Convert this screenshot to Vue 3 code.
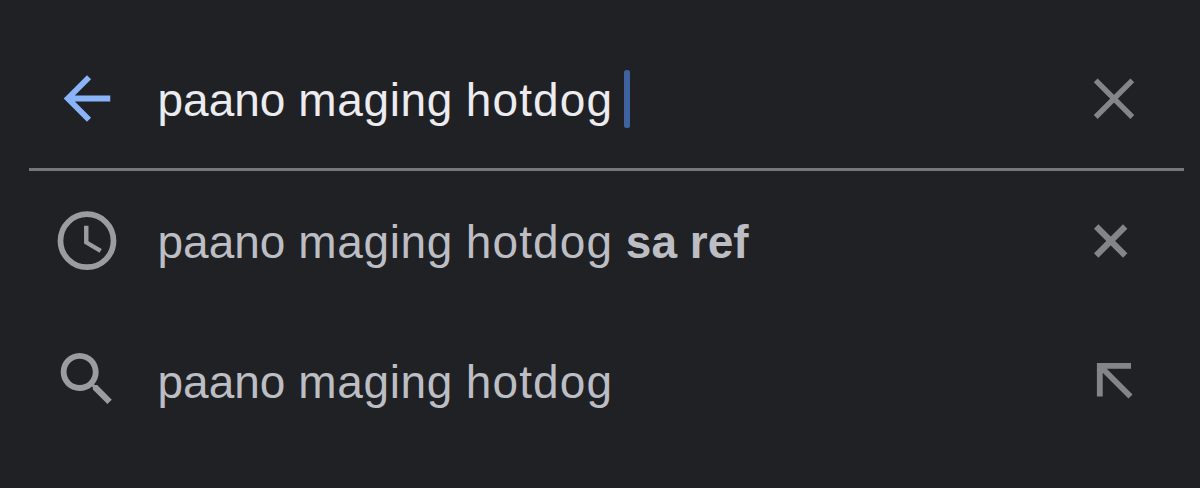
<script setup>
const words = [
  { text: 'paano', cls: 'first' },
  { text: 'maging', cls: 'second' },
  { text: 'hotdog', cls: 'third' },
]
</script>

<template>
  <main class="search">
    <header class="row field">
      <svg class="lead back" viewBox="0 0 60 60"><path transform="translate(-4.95 -5.450) scale(2.91)" d="M20 11H7.830l5.590-5.590L12 4l-8 8 8 8 1.410-1.410L7.830 13H20z" /></svg>
      <span class="text"><template v-for="(w, i) in words" :key="w.text">{{ i ? ' ' : '' }}<span :class="w.cls">{{ w.text }}</span></template></span><i class="caret"></i>
      <svg class="trail" viewBox="0 0 60 60"><path d="M11.700 11.400L48.300 48M48.300 11.400L11.700 48" stroke-width="5.400" /></svg>
    </header>
    <div class="row recent">
      <svg class="lead" viewBox="0 0 60 60"><circle cx="30" cy="29.700" r="26.500" fill="none" stroke="#999da2" stroke-width="5.700" /><path transform="translate(-5.400 -5.900) scale(2.950)" d="M12.500 7H11v6l5.250 3.150.750-1.230-4.500-2.670z" /></svg>
      <span class="text"><template v-for="(w, i) in words" :key="w.text">{{ i ? ' ' : '' }}<span :class="w.cls">{{ w.text }}</span></template>{{ ' ' }}<b>sa ref</b></span>
      <svg class="trail" viewBox="0 0 60 60"><path d="M12.200 15.500L41.200 44.500M41.200 15.500L12.200 44.500" stroke-width="6.200" /></svg>
    </div>
    <div class="row suggestion">
      <svg class="lead" viewBox="0 0 60 60"><path transform="translate(-5.060 -6.760) scale(2.920)" d="M15.500 14h-.790l-.280-.270C15.410 12.590 16 11.110 16 9.500 16 5.910 13.090 3 9.500 3S3 5.910 3 9.500 5.910 16 9.500 16c1.610 0 3.090-.590 4.230-1.570l.270.280v.790l5 4.990L20.490 19zM9.500 14C7.010 14 5 11.990 5 9.500S7.010 5 9.500 5 14 7.010 14 9.500 11.990 14 9.500 14z" /></svg>
      <span class="text"><template v-for="(w, i) in words" :key="w.text">{{ i ? ' ' : '' }}<span :class="w.cls">{{ w.text }}</span></template></span>
      <svg class="trail" viewBox="0 0 60 60"><path d="M15.800 45.500V14.900H47M16 15L46.500 45.500" stroke-width="5.800" /></svg>
    </div>
  </main>
</template>

<style>
body { margin: 0; background: #202125; }
</style>
<style scoped>
.search { width: 1200px; height: 488px; box-sizing: border-box; padding: 30px 16px 0 29px; background: #202125; border-bottom: 1px solid #251d25; font-family: "Liberation Sans", Arial, sans-serif; overflow: hidden; }
.row { height: 140px; box-sizing: border-box; display: flex; align-items: center; padding: 0 40px 0 28px; color: #bdbec4; }
.field { height: 141px; border-bottom: 3px solid #77777a; color: #ebebf0; }
.lead, .trail { width: 60px; height: 60px; flex: none; }
.lead { fill: #999da2; }
.back { fill: #8ab4f8; }
.trail { margin-left: auto; fill: none; stroke: #82868b; }
.text { margin-left: 40.5px; padding-top: 2px; font-size: 46px; line-height: 60px; white-space: pre; }
.suggestion .text { padding-top: 1px; }
.second { letter-spacing: 0.65px; }
.third { letter-spacing: 1.1px; }
.caret { width: 6px; height: 58px; margin-left: 11px; border-radius: 2.5px; background: #3f63a0; }
</style>
